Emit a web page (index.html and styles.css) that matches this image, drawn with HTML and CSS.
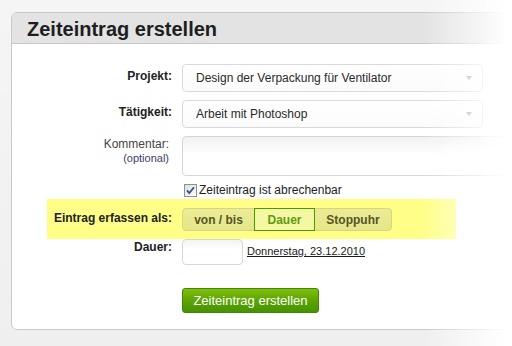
FILE: index.html
```html
<!DOCTYPE html>
<html lang="de">
<head>
    <meta charset="UTF-8">
    <meta name="viewport" content="width=device-width, initial-scale=1.0">
    <title>Zeiteintrag erstellen</title>
    <link rel="stylesheet" href="styles.css">
</head>
<body>
    <div class="panel">
        <div class="panel-head">
            <h1>Zeiteintrag erstellen</h1>
        </div>

        <form class="entry-form">
            <div class="row">
                <label class="row-label" for="project">Projekt:</label>
                <div class="select-wrap">
                    <select id="project" class="select">
                        <option>Design der Verpackung für Ventilator</option>
                    </select>
                </div>
            </div>

            <div class="row">
                <label class="row-label" for="task">Tätigkeit:</label>
                <div class="select-wrap">
                    <select id="task" class="select">
                        <option>Arbeit mit Photoshop</option>
                    </select>
                </div>
            </div>

            <div class="row row-comment">
                <label class="row-label label-light" for="comment">
                    Kommentar:
                    <span class="optional">(optional)</span>
                </label>
                <textarea id="comment" class="comment"></textarea>
            </div>

            <div class="row row-check">
                <label class="check">
                    <span class="check-box">
                        <svg width="13" height="13" viewBox="0 0 13 13">
                            <defs>
                                <linearGradient id="cb" x1="0" y1="0" x2="1" y2="1">
                                    <stop offset="0" stop-color="#dcdcdc"/>
                                    <stop offset="1" stop-color="#ffffff"/>
                                </linearGradient>
                            </defs>
                            <rect x="0.5" y="0.5" width="12" height="12" fill="url(#cb)" stroke="#8e8f8f"/>
                            <path d="M3 6.3 L5.3 9 L10 3.2" fill="none" stroke="#34508c" stroke-width="1.8"/>
                        </svg>
                    </span>
                    Zeiteintrag ist abrechenbar
                </label>
            </div>

            <div class="row row-mode">
                <span class="row-label mode-label">Eintrag erfassen als:</span>
                <div class="seg">
                    <button type="button" class="seg-btn seg-first">von / bis</button>
                    <button type="button" class="seg-btn seg-active">Dauer</button>
                    <button type="button" class="seg-btn seg-last">Stoppuhr</button>
                </div>
            </div>

            <div class="row row-duration">
                <label class="row-label" for="duration">Dauer:</label>
                <input type="text" id="duration" class="duration">
                <a href="#" class="date-link">Donnerstag, 23.12.2010</a>
            </div>

            <div class="row row-submit">
                <button type="submit" class="submit">Zeiteintrag erstellen</button>
            </div>
        </form>
    </div>

    <div class="fade"></div>
</body>
</html>
```

FILE: styles.css
```css
* {
    box-sizing: border-box;
    margin: 0;
    padding: 0;
}

html, body {
    height: 100%;
}

body {
    font-family: "Liberation Sans", Arial, sans-serif;
    font-size: 12px;
    color: #222;
    background: linear-gradient(to bottom, #f5f5f5, #efefef);
    padding: 12px 0 0 11px;
    overflow: hidden;
}

.panel {
    width: 540px;
    background-color: #fff;
    border: 1px solid #c9c9c9;
    border-radius: 6px;
    overflow: hidden;
}

.panel-head {
    height: 31px;
    background-color: #e3e3e3;
    border-bottom: 1px solid #c9c9c9;
    padding: 2px 0 0 15px;
}

.panel-head h1 {
    font-size: 20px;
    line-height: 28px;
    font-weight: bold;
    color: #1e1e1e;
}

.entry-form {
    padding: 20px 0 16px 0;
}

.row {
    display: flex;
    align-items: flex-start;
    gap: 10px;
    margin-bottom: 8px;
}

.row-label {
    flex: none;
    width: 160px;
    text-align: right;
    font-weight: bold;
    line-height: 14px;
    padding-top: 5px;
    color: #222;
    white-space: nowrap;
}

.label-light {
    font-weight: normal;
    color: #444;
    padding: 1px 3px 0 0;
    display: flex;
    flex-direction: column;
    align-items: flex-end;
}

.optional {
    font-size: 11px;
    line-height: 13px;
    padding-top: 1px;
    color: #3c3c6a;
}

.select-wrap {
    position: relative;
    width: 301px;
}

.select-wrap::after {
    content: "";
    position: absolute;
    right: 11px;
    top: 12px;
    border-left: 3.5px solid transparent;
    border-right: 3.5px solid transparent;
    border-top: 4px solid #a4a4a4;
}

.select {
    appearance: none;
    -webkit-appearance: none;
    width: 100%;
    height: 28px;
    padding: 0 24px 0 13px;
    font-family: inherit;
    font-size: 12px;
    line-height: 14px;
    color: #2a2a2a;
    background: linear-gradient(to bottom, #fff, #fbfbfb);
    border: 1px solid #d9d9d9;
    border-radius: 4px;
}

.comment {
    width: 340px;
    height: 40px;
    border: 1px solid #d6d6d6;
    border-radius: 4px;
    background: linear-gradient(to bottom, #f1f1f1, #fff 45%);
    resize: none;
    font-family: inherit;
}

.row-check {
    padding-left: 171px;
    margin: -1px 0 2px;
}

.check {
    display: flex;
    align-items: center;
    gap: 2px;
    line-height: 14px;
    font-size: 12px;
    color: #222;
}

.check-box {
    display: block;
    width: 13px;
    height: 13px;
    margin: 0 0 0 1px;
}

.check-box svg {
    display: block;
}

.row-mode {
    width: 409px;
    margin: 0 0 0 35px;
    padding: 9px 0 8px 0;
    background-color: #ffff88;
}

.mode-label {
    width: 125px;
    padding-top: 3px;
}

.seg {
    display: flex;
}

.seg-btn {
    height: 23px;
    font-family: inherit;
    font-size: 12px;
    font-weight: bold;
    line-height: 14px;
    color: #555528;
    background: linear-gradient(to bottom, #ecec96, #e5e58a);
    border: 1px solid #d6d67a;
    margin-left: -1px;
    cursor: pointer;
}

.seg-first {
    width: 73px;
    margin-left: 0;
    border-radius: 4px 0 0 4px;
}

.seg-active {
    width: 61px;
    position: relative;
    color: #5f9a12;
    background: #f5f8a2;
    border-color: #4f9a00;
}

.seg-last {
    width: 78px;
    border-radius: 0 4px 4px 0;
}

.row-duration {
    gap: 4px;
    margin-bottom: 23px;
}

.row-duration .row-label {
    margin-right: 6px;
    padding-top: 1px;
}

.duration {
    width: 61px;
    height: 26px;
    border: 1px solid #d6d6d6;
    border-radius: 4px;
    background: linear-gradient(to bottom, #f4f4f4, #fff 40%);
}

.date-link {
    font-size: 11px;
    line-height: 13px;
    padding-top: 6px;
    color: #1a1a1a;
    text-decoration: underline;
}

.row-submit {
    padding-left: 170px;
    margin-bottom: 0;
}

.submit {
    width: 137px;
    height: 25px;
    font-family: inherit;
    font-size: 13px;
    line-height: 15px;
    color: #fff;
    background: linear-gradient(to bottom, #7fbe0e, #5ea404 50%, #449300);
    border: 1px solid #3d8a00;
    border-radius: 3px;
    cursor: pointer;
}

.fade {
    position: fixed;
    top: 0;
    right: 0;
    width: 90px;
    height: 100%;
    background: linear-gradient(to right, rgba(255, 255, 255, 0), #fff 96%);
    pointer-events: none;
}
```
